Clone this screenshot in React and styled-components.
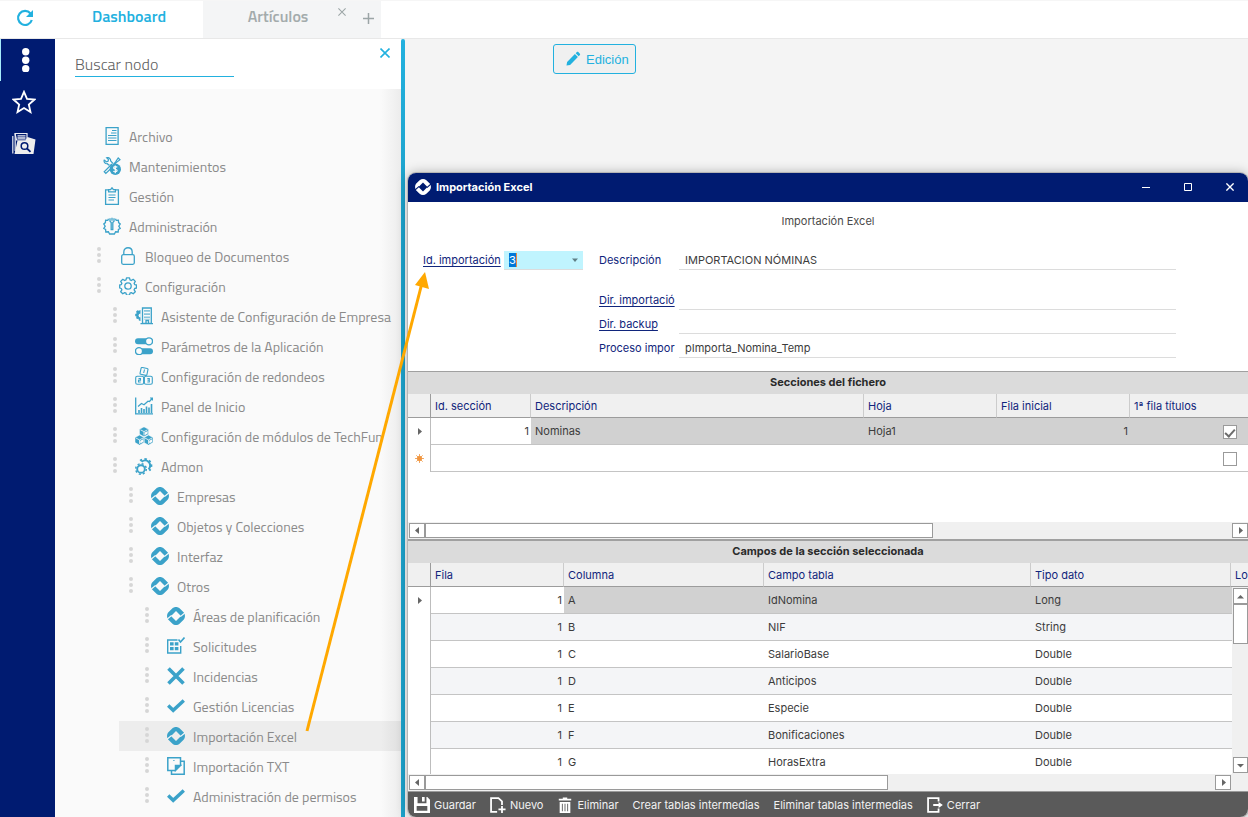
import { useState } from 'react';
import styled, { createGlobalStyle, css } from 'styled-components';

const NAVY = '#001b71';
const CYAN = '#22b1df';
const ICON = '#3ba2c9';

const GlobalStyle = createGlobalStyle`
    * {
        box-sizing: border-box;
    }

    body {
        margin: 0;
        font-family: Inter, "Liberation Sans", sans-serif;
        font-size: 11px;
        color: #3c3c3c;
    }

    button, input, select {
        font: inherit;
        color: inherit;
        margin: 0;
        padding: 0;
        border: 0;
        border-radius: 0;
        background: none;
        outline: none;
    }

    button {
        cursor: pointer;
    }
`;

const Page = styled.div`
    position: relative;
    display: flex;
    flex-direction: column;
    height: 100vh;
    overflow: hidden;
    background: #f4f4f4;
`;

/* ---------- top bar ---------- */

const TopBar = styled.header`
    display: flex;
    flex: none;
    height: 39px;
    background: #ffffff;
    border-top: 1px solid #f6f6f6;
    border-bottom: 1px solid #e8e8e8;
    font-family: "Titillium Web", Roboto, sans-serif;
`;

const RefreshButton = styled.button`
    display: flex;
    align-items: center;
    justify-content: center;
    width: 55px;
    padding: 0 5px 3px 0;
    color: ${CYAN};
`;

const Tab = styled.div`
    display: flex;
    align-items: flex-start;
    width: ${({ $active }) => ($active ? 148 : 178)}px;
    background: ${({ $active }) => ($active ? '#ffffff' : '#f4f5f6')};
    color: ${({ $active }) => ($active ? CYAN : '#a3abac')};
`;

const TabLabel = styled.button`
    flex: 1;
    height: 30px;
    font-size: 16px;
    font-weight: 600;
    text-align: center;
    padding-left: ${({ $inset }) => ($inset ? 24 : 0)}px;
`;

const TabButton = styled.button`
    display: flex;
    align-items: center;
    justify-content: center;
    width: 26px;
    height: ${({ $tall }) => ($tall ? 34 : 22)}px;
    color: #9ba5a6;
`;

/* ---------- side rail ---------- */

const Body = styled.div`
    display: flex;
    flex: 1;
    min-height: 0;
`;

const Rail = styled.nav`
    display: flex;
    flex-direction: column;
    flex: none;
    width: 55px;
    background: ${NAVY};
`;

const RailButton = styled.button`
    display: flex;
    align-items: center;
    justify-content: center;
    height: 42px;
    padding-right: ${({ $active }) => ($active ? 4 : 8)}px;
    color: #ffffff;
    border-left: 1px solid ${({ $active }) => ($active ? '#a5ecfb' : NAVY)};
`;

/* ---------- tree ---------- */

const TreePanel = styled.aside`
    display: flex;
    flex-direction: column;
    flex: none;
    width: 346px;
    background: #fafafa;
    font-family: "Titillium Web", Roboto, sans-serif;
`;

const TreeHead = styled.div`
    display: flex;
    justify-content: space-between;
    align-items: flex-start;
    height: 50px;
    padding: 9px 11px 0 20px;
    background: #ffffff;
`;

const SearchInput = styled.input`
    width: 159px;
    height: 29px;
    padding-top: 3px;
    font-size: 16px;
    font-weight: 300;
    border-bottom: 1px solid ${CYAN};

    &::placeholder {
        color: #606060;
        opacity: 1;
    }
`;

const CloseButton = styled.button`
    display: flex;
    color: ${CYAN};
`;

const TreeList = styled.ul`
    flex: 1;
    margin: 0;
    padding: 32px 0 0;
    list-style: none;
    overflow: hidden;
    background: linear-gradient(to left, #ececec, #fafafa 20px);
`;

const TreeRow = styled.li`
    margin-left: ${({ $level }) => $level * 16}px;
    background: ${({ $selected }) => ($selected ? 'rgba(0, 0, 0, 0.05)' : 'transparent')};
`;

const TreeButton = styled.button`
    display: flex;
    align-items: center;
    width: 100%;
    height: 30px;
    padding-left: 26px;
    font-size: 14px;
    font-weight: 400;
    color: #8a8a8a;
    white-space: nowrap;

    svg {
        flex: none;
    }
`;

const DotsSlot = styled.span`
    display: flex;
    width: 22px;
    padding-bottom: 2px;
    color: #d6d6d6;
`;

const TreeLabel = styled.span`
    padding-left: 8px;
`;

const Splitter = styled.div`
    flex: none;
    width: 4px;
    border-radius: 2px 2px 0 0;
    background: linear-gradient(${CYAN}, #1da2cb 160px);
`;

/* ---------- workspace ---------- */

const Workspace = styled.main`
    display: flex;
    flex-direction: column;
    flex: 1;
    min-width: 0;
    padding-left: 3px;
`;

const WorkspaceBar = styled.div`
    flex: none;
    height: 134px;
    padding: 5px 0 0 145px;
`;

const EditButton = styled.button`
    display: flex;
    align-items: center;
    gap: 5px;
    height: 30px;
    padding: 0 6px 0 11px;
    border: 1px solid ${CYAN};
    border-radius: 3px;
    background: #f0f0f0;
    color: ${CYAN};
    font-family: "Liberation Sans", sans-serif;
    font-size: 13px;
`;

const Window = styled.section`
    display: flex;
    flex-direction: column;
    flex: 1;
    min-height: 0;
    border-radius: 8px;
    overflow: hidden;
    background: #ffffff;
    box-shadow: 0 0 0 1px #b5b5b5, 0 0 12px rgba(0, 0, 0, 0.3);
`;

const TitleBar = styled.div`
    display: flex;
    align-items: center;
    flex: none;
    height: 29px;
    padding: 0 0 1px 7px;
    background: ${NAVY};
    color: #ffffff;
`;

const WindowTitle = styled.h1`
    flex: 1;
    margin: 0;
    padding-left: 5px;
    font-size: 11px;
    font-weight: 700;
`;

const WindowButton = styled.button`
    display: flex;
    align-items: center;
    justify-content: center;
    width: 42px;
    height: 28px;

    &:last-child {
        width: 36px;
        margin-left: 3px;
    }
`;

/* ---------- form ---------- */

const Form = styled.form`
    flex: none;
    padding: 0 72px 13px 15px;
`;

const FormTitle = styled.h2`
    height: 44px;
    margin: 0 -57px 0 0;
    font-size: 11px;
    font-weight: 400;
    line-height: 38px;
    text-align: center;
    color: #4a4a4a;
`;

const Fields = styled.div`
    display: grid;
    grid-template-columns: 81px 79px 16px 80px 1fr;
    grid-auto-rows: 24px;
`;

const DirFields = styled(Fields)`
    margin-top: 16px;
`;

const Label = styled.label`
    grid-column: ${({ $first }) => ($first ? 1 : 4)};
    overflow: hidden;
    white-space: nowrap;
    line-height: 28px;
    color: #10257c;
    text-decoration: ${({ $link }) => ($link ? 'underline' : 'none')};
    text-decoration-skip-ink: none;
    text-underline-offset: 2px;
`;

const TextInput = styled.input`
    grid-column: 5;
    min-width: 0;
    height: 24px;
    padding: 4px 6px 0;
    border-bottom: 1px solid #dcdcdc;
`;

const Combo = styled.div`
    display: grid;
    align-self: end;
    align-items: center;
    height: 19px;
    border-bottom: 1px solid #dcdcdc;

    > * {
        grid-area: 1 / 1;
    }

    svg {
        justify-self: end;
        margin-right: 4px;
        pointer-events: none;
    }
`;

const ComboSelect = styled.select`
    appearance: none;
    width: 100%;
    height: 18px;
    padding-left: 5px;
    color: #ffffff;
    background:
        linear-gradient(#0078d7, #0078d7) 5px 2px / 7px 14px no-repeat,
        linear-gradient(#f08a3c, #f08a3c) 12px 2px / 1px 14px no-repeat,
        #c0f4fe;

    option {
        color: #3c3c3c;
    }
`;

/* ---------- grids ---------- */

const Section = styled.section`
    display: flex;
    flex-direction: column;
    flex: ${({ $grow }) => ($grow ? '1 1 0' : 'none')};
    min-height: 0;
    border-top: ${({ $grow }) => ($grow ? 2 : 1)}px solid #a0a0a0;
`;

const SectionTitle = styled.h2`
    flex: none;
    margin: 0;
    height: 22px;
    font-size: 11px;
    font-weight: 700;
    line-height: 21px;
    text-align: center;
    color: #2a2a2a;
    background: #dbdbdb;
`;

const GridArea = styled.div`
    position: relative;
    overflow: hidden;
    ${({ $grow }) => ($grow ? css`flex: 1 1 0; min-height: 0;` : css`height: 128px;`)}
`;

const Table = styled.table`
    width: 100%;
    table-layout: fixed;
    border-collapse: separate;
    border-spacing: 0;
`;

const Col = styled.col`
    width: ${({ $width }) => ($width ? `${$width}px` : 'auto')};
`;

const Th = styled.th`
    height: 24px;
    padding: 0 4px;
    overflow: hidden;
    white-space: nowrap;
    text-align: left;
    font-weight: 400;
    color: #10257c;
    background: #f0f0f0;
    border-right: 1px solid ${({ $marker }) => ($marker ? '#9c9c9c' : '#cccccc')};
    border-bottom: 1px solid #9c9c9c;

    &:last-child {
        border-right: 0;
    }
`;

const Marker = styled.td`
    height: 27px;
    padding: 0;
    text-align: center;
    border-right: 1px solid #bdbdbd;

    svg {
        display: block;
        margin: 0 auto;
    }
`;

const Td = styled.td`
    height: 27px;
    padding: 0 4px;
    overflow: hidden;
    white-space: nowrap;
    text-align: ${({ $align }) => $align || 'left'};
    border-bottom: 1px solid #c4c4c4;
`;

const Tr = styled.tr`
    ${Td} {
        background: ${({ $striped }) => ($striped ? '#f4f5f7' : '#ffffff')};
    }

    ${({ $selected }) => $selected && css`
        ${Td}:nth-child(n + 3) {
            background: #d1d1d1;
        }
    `}
`;

const NumberTd = styled(Td)`
    padding-right: 2px;
    text-align: right;
`;

const CheckTd = styled(Td)`
    text-align: right;
    padding-right: 11px;
`;

const Checkbox = styled.input`
    appearance: none;
    display: inline-block;
    width: 14px;
    height: 14px;
    vertical-align: middle;
    border: 1px solid #9a9a9a;
    background: #ffffff;

    &:checked::after {
        content: '';
        display: block;
        width: 4px;
        height: 8px;
        margin: 1px auto 0;
        border: solid #6c6c6c;
        border-width: 0 2px 2px 0;
        transform: rotate(42deg);
    }
`;

const ScrollRow = styled.div`
    display: flex;
    flex: none;
    height: 17px;
    padding: 1px ${({ $corner }) => ($corner ? 17 : 0)}px 1px 1px;
    background: #f0f0f0;
`;

const ScrollColumn = styled.div`
    position: absolute;
    top: 24px;
    right: 0;
    bottom: 0;
    width: 16px;
    display: flex;
    flex-direction: column;
    padding: 1px 0 1px 1px;
    background: #f0f0f0;
`;

const ScrollButton = styled.button`
    display: flex;
    align-items: center;
    justify-content: center;
    flex: 0 0 16px;
    background: #ffffff;
    border: 1px solid #9a9a9a;
    color: #666666;
`;

const Thumb = styled.div`
    flex: ${({ $size }) => $size};
    background: #ffffff;
    border: 1px solid #9a9a9a;
`;

const Track = styled.div`
    flex: ${({ $size }) => $size};
`;

/* ---------- actions ---------- */

const ActionBar = styled.footer`
    display: flex;
    align-items: center;
    flex: none;
    height: 26px;
    padding: 1px 0 0 6px;
    gap: 14px;
    background: #5a5a5a;
    border-top: 1px solid #9a9a9a;
    color: #f2f2f2;
`;

const Action = styled.button`
    display: flex;
    align-items: center;
    gap: 4px;
    height: 24px;
    white-space: nowrap;
`;

const ArrowLayer = styled.svg`
    position: absolute;
    top: 0;
    left: 0;
    pointer-events: none;
`;

/* ---------- icons ---------- */

function Svg({ size = 18, children, ...rest }) {
    return (
        <svg width={size} height={size} viewBox="0 0 18 18" fill="none" stroke={ICON} strokeWidth="1.3" {...rest}>
            {children}
        </svg>
    );
}

function BrandIcon({ color = ICON, gap = '#fafafa', size = 18 }) {
    return (
        <Svg size={size} stroke="none">
            <path
                fill={color}
                fillRule="evenodd"
                d="M5.2 1.5C7.4-.5 10.6-.5 12.8 1.5L16.6 5.2C18.4 7.3 18.4 10.7 16.6 12.8L12.8 16.5C10.6 18.5 7.4 18.5 5.2 16.5L1.4 12.8C-.4 10.7-.4 7.3 1.4 5.2ZM9 4L4 9L9 14L14 9Z"
            />
            <path d="M4.600 8.400L0 12.400M13.400 9.600L18 5.600" stroke={gap} strokeWidth="1.200" />
        </Svg>
    );
}

const treeIcons = {
    file: (
        <Svg>
            <path d="M3.1.7h12v16.6h-12z" />
            <path d="M9 3.500h4.500M8 6h5.500M5 8.500h8.500M5 11h8.500M5 13.500h8.500" strokeWidth="1.200" />
        </Svg>
    ),
    maintenance: (
        <Svg>
            <path d="M6.600 7.600L9 10M1.300 2.800l2 2 1.700-.5.5-1.600-1.900-1.900c2-.8 4.300.7 4 3L10 6.500M1.300 2.800C.5 4.800 2 7 4.300 6.700L6 8.300M10.500 7.300l2.100-2.500L15.200 1l1.800 1.800-3.800 2.800-2 2M9 7L1.200 14.800l1.600 1.700 4.400-4.300" strokeWidth="1.200" />
            <circle cx="12.300" cy="12.300" r="5.700" fill={ICON} stroke="none" />
            <path d="M14.200 10.400c-.6-1-3.600-1-3.600.5 0 1.600 3.500 1 3.500 2.700 0 1.500-3 1.500-3.700.4M12.300 8.500v7.800" stroke="#fafafa" strokeWidth="1.200" />
        </Svg>
    ),
    clipboard: (
        <Svg>
            <path d="M5.500 2.800H2.600v14.500h12.800V2.800h-2.900M5.600 4.800V2.600h2L9 .8l1.400 1.800h2v2.200z" />
            <path d="M5.500 8h7M5.500 10.500h7M5.500 13h5.500" strokeWidth="1.200" />
        </Svg>
    ),
    admin: (
        <Svg>
            <path d="M5.500 1.800L4.800 3.400 2.600 3.200 2.400 5.600.8 7l1.400 2.200L.8 11.500l1.800 1 .2 2.500 2.600-.2 1.200 2.200h4.800l1.200-2.200 2.600.2.200-2.500 1.800-1-1.400-2.300L17.200 7l-1.600-1.400-.2-2.400-2.200.2-.7-1.600" />
            <path d="M7 1.200v3l1.200 1.400v7h1.600v-7L11 4.200v-3M9 .8v3" />
        </Svg>
    ),
    lock: (
        <Svg>
            <rect x="2.700" y="7.700" width="12.600" height="9.600" rx="1.500" />
            <path d="M4.800 7.700V5c0-5.700 8.400-5.700 8.400 0v2.700" />
        </Svg>
    ),
    gear: (
        <Svg>
            <circle cx="9" cy="9" r="3.200" />
            <path
                strokeLinejoin="round"
                d="M7.500.800h3l.5 2.100 1.300.6 1.900-1.200 2.100 2.100-1.200 1.900.6 1.300 1.800.400v3l-1.800.5-.6 1.300 1.200 1.900-2.100 2.100-1.900-1.200-1.300.6-.5 2H7.500l-.5-2-1.300-.6-1.900 1.200-2.100-2.100 1.200-1.900-.6-1.300L.700 11V8l1.600-.400.600-1.300-1.200-1.900 2.100-2.100 1.900 1.200L7 2.900z"
            />
        </Svg>
    ),
    building: (
        <Svg>
            <path d="M7.500 1h8.800v15.300H7.500zM5.500 16.600H18" />
            <path d="M10 3v10M12 3v10M14 3v10" strokeDasharray="1.800 1.400" strokeWidth="1.200" />
            <path d="M5.500 3v11l-1.600-.6-.4-1.600-1.600.2-1-1.600L2 9.900.2 9V7l1.600-.7-.8-1.500 1.400-1.500 1.400.5z" fill={ICON} stroke="none" />
            <path d="M5.600 6.500a2 2 0 000 4" fill="#fafafa" stroke="none" />
            <path d="M11 16v-2.500h2.500V16" />
        </Svg>
    ),
    toggles: (
        <Svg>
            <rect x="0" y="1.300" width="18" height="6" rx="3" fill={ICON} stroke="none" />
            <rect x="0" y="11.300" width="18" height="6" rx="3" fill={ICON} stroke="none" />
            <circle cx="14" cy="4.300" r="3.500" fill="#fafafa" />
            <circle cx="4" cy="14.200" r="3.500" fill="#fafafa" />
        </Svg>
    ),
    blocks: (
        <Svg strokeWidth="1.100">
            <rect x="5.600" y=".900" width="7" height="7" rx="1" transform="rotate(12 9 4)" />
            <rect x=".700" y="9.300" width="7.900" height="7.900" rx="1.500" />
            <rect x="9.400" y="9.300" width="7.900" height="7.900" rx="1.500" />
            <path d="M9.500 2.500L8.700 6M3.500 11.600h2v1.600h-2v1.800h2.200M12.300 11.600h2V15h-2M12.500 13.300h1.800" />
        </Svg>
    ),
    chart: (
        <Svg>
            <path d="M.7.500v16.300H18" />
            <path d="M3 9.500l3.500-3 2.500 1.200 4-3.500 1.500.3L17 1.500M15 1h2.500v2.500" strokeWidth="1.200" />
            <path d="M4 16v-3M6.500 16v-5M9 16v-4M11.500 16V9.500M14 16v-5.500M16.500 16V7" strokeWidth="1.600" />
        </Svg>
    ),
    cubes: (
        <Svg stroke="#fafafa" strokeWidth=".600">
            <path fill={ICON} d="M9-.2l4.600 2.400v5L9 9.800 4.400 7.200v-5zM4.500 8l4.600 2.500v5l-4.600 2.700-4.600-2.700v-5zM13.500 8l4.600 2.500v5l-4.600 2.700-4.600-2.700v-5z" />
            <path d="M5.400 2.800L9 4.600l3.600-1.800M9 4.600v4M.9 11l3.600 1.900L8.100 11M4.500 12.900v4M9.900 11l3.600 1.900 3.600-1.900M13.500 12.900v4" strokeWidth=".800" />
            <path d="M9.700 5.500l3-1.500v2.600l-3 1.600zM5.200 13.800l3-1.500v2.600l-3 1.600zM14.200 13.800l3-1.500v2.600l-3 1.600z" fill="#fafafa" stroke="none" />
        </Svg>
    ),
    gears: (
        <Svg>
            <circle cx="6" cy="12" r="3.800" strokeWidth="1.900" />
            <circle cx="6" cy="12" r="5.300" strokeWidth="1.500" strokeDasharray="2.080 2.080" />
            <path d="M6.600 4.900a4.700 4.700 0 117 7.300" strokeWidth="2" />
            <path d="M5.200 3.800a6.300 6.300 0 119 9.800" strokeWidth="2" strokeDasharray="2.300 2.300" />
        </Svg>
    ),
    request: (
        <Svg>
            <path d="M10.500 3H.700v13h13V9" strokeWidth="1.400" />
            <path d="M3 5.300h3.600v3.200H3zM7.800 5.300h3.600v3.200H7.800zM3 10h3.600v3.200H3zM7.800 10h3.600v3.200H7.800z" fill={ICON} stroke="none" />
            <path d="M11.500 2.500l2 2.500L17.500.500" strokeWidth="1.600" />
        </Svg>
    ),
    cross: (
        <Svg strokeWidth="3.600">
            <path d="M1.500 1.500l15 15M16.500 1.500l-15 15" />
        </Svg>
    ),
    check: (
        <Svg strokeWidth="3.400">
            <path d="M1.200 8.500l5 4.800L16.800 3.500" />
        </Svg>
    ),
    copy: (
        <Svg strokeWidth="1.500">
            <path d="M13.500 4.200h3.700v13H4.500v-3.500" />
            <path d="M8.500 13.500H.800V.800h12.700V9" />
            <path d="M13.500 8.500l-5 5v-5z" fill={ICON} />
            <path d="M6.300 3.500h1.200" strokeWidth="1.200" />
        </Svg>
    ),
    brand: <BrandIcon />
};

function Dots({ radius = 2, pitch = 6 }) {
    const width = radius * 2;
    const height = width + pitch * 2;
    return (
        <svg width={width} height={height} fill="currentColor">
            {[0, 1, 2].map(i => <circle key={i} cx={radius} cy={radius + i * pitch} r={radius} />)}
        </svg>
    );
}

function Cross({ size = 10, width = 1.4 }) {
    return (
        <svg width={size} height={size} viewBox="0 0 10 10" stroke="currentColor" strokeWidth={width}>
            <path d="M.5.500l9 9M9.500.500l-9 9" />
        </svg>
    );
}

const triangles = {
    left: 'M6 1v7L2 4.500z',
    right: 'M3 1v7L7 4.500z',
    up: 'M1 6.500h7L4.500 3z',
    down: 'M1 3h7L4.500 6.500z'
};

function Triangle({ direction }) {
    return (
        <svg width="9" height="9" fill="#666666">
            <path d={triangles[direction]} />
        </svg>
    );
}

/* ---------- data ---------- */

const nodes = [
    { label: 'Archivo', level: 0, icon: 'file' },
    { label: 'Mantenimientos', level: 0, icon: 'maintenance' },
    { label: 'Gestión', level: 0, icon: 'clipboard' },
    { label: 'Administración', level: 0, icon: 'admin' },
    { label: 'Bloqueo de Documentos', level: 1, icon: 'lock' },
    { label: 'Configuración', level: 1, icon: 'gear' },
    { label: 'Asistente de Configuración de Empresa', level: 2, icon: 'building' },
    { label: 'Parámetros de la Aplicación', level: 2, icon: 'toggles' },
    { label: 'Configuración de redondeos', level: 2, icon: 'blocks' },
    { label: 'Panel de Inicio', level: 2, icon: 'chart' },
    { label: 'Configuración de módulos de TechFun', level: 2, icon: 'cubes' },
    { label: 'Admon', level: 2, icon: 'gears' },
    { label: 'Empresas', level: 3, icon: 'brand' },
    { label: 'Objetos y Colecciones', level: 3, icon: 'brand' },
    { label: 'Interfaz', level: 3, icon: 'brand' },
    { label: 'Otros', level: 3, icon: 'brand' },
    { label: 'Áreas de planificación', level: 4, icon: 'brand' },
    { label: 'Solicitudes', level: 4, icon: 'request' },
    { label: 'Incidencias', level: 4, icon: 'cross' },
    { label: 'Gestión Licencias', level: 4, icon: 'check' },
    { label: 'Importación Excel', level: 4, icon: 'brand' },
    { label: 'Importación TXT', level: 4, icon: 'copy' },
    { label: 'Administración de permisos', level: 4, icon: 'check' }
];

const fields = [
    { column: 'A', name: 'IdNomina', type: 'Long' },
    { column: 'B', name: 'NIF', type: 'String' },
    { column: 'C', name: 'SalarioBase', type: 'Double' },
    { column: 'D', name: 'Anticipos', type: 'Double' },
    { column: 'E', name: 'Especie', type: 'Double' },
    { column: 'F', name: 'Bonificaciones', type: 'Double' },
    { column: 'G', name: 'HorasExtra', type: 'Double' }
];

const actionIcons = {
    save: (
        <Svg size={16} stroke="none" fill="#ffffff">
            <path fillRule="evenodd" d="M0 0h4v7h10V0h1l3 3v15H0zM3 10v5.500h12V10z" />
            <path d="M9 0h3v5H9z" />
        </Svg>
    ),
    create: (
        <Svg size={16} stroke="#ffffff" strokeWidth="2">
            <path d="M8 16.800H1.200V1.200h8.300L13.500 5v4M13.500 10v8M9.500 14h8" />
        </Svg>
    ),
    remove: (
        <Svg size={16} stroke="none" fill="#ffffff">
            <path fillRule="evenodd" d="M2 2h4.500V.500h5V2H16v2H2zM3 5.500h12V18H3zM5.500 7.500v8.500h1V7.500zM8.500 7.500v8.500h1V7.500zM11.500 7.500v8.500h1V7.500z" />
        </Svg>
    ),
    exit: (
        <Svg size={16} stroke="#ffffff" strokeWidth="2">
            <path d="M13 5V1.200H1.200v15.600H13V13M7 9h9" />
            <path d="M13 5.500L17.800 9 13 12.500z" fill="#ffffff" stroke="none" />
        </Svg>
    )
};

const actions = [
    { label: 'Guardar', icon: 'save' },
    { label: 'Nuevo', icon: 'create' },
    { label: 'Eliminar', icon: 'remove' },
    { label: 'Crear tablas intermedias' },
    { label: 'Eliminar tablas intermedias' },
    { label: 'Cerrar', icon: 'exit' }
];

/* ---------- components ---------- */

function HorizontalScroll({ thumb, track, corner }) {
    return (
        <ScrollRow $corner={corner}>
            <ScrollButton aria-label="Desplazar a la izquierda"><Triangle direction="left" /></ScrollButton>
            <Thumb $size={thumb} />
            <Track $size={track} />
            <ScrollButton aria-label="Desplazar a la derecha"><Triangle direction="right" /></ScrollButton>
        </ScrollRow>
    );
}

function Header() {
    return (
        <TopBar>
            <RefreshButton aria-label="Actualizar">
                <svg width="18" height="18" viewBox="0 0 18 18" fill="none" stroke="currentColor" strokeWidth="2.200">
                    <path d="M14.500 4.500A7 7 0 1015.800 11" />
                    <path d="M17 1v7h-7z" fill="currentColor" stroke="none" />
                </svg>
            </RefreshButton>
            <Tab $active>
                <TabLabel>Dashboard</TabLabel>
            </Tab>
            <Tab>
                <TabLabel $inset>Artículos</TabLabel>
                <TabButton aria-label="Cerrar pestaña"><Cross size={8} width={1.3} /></TabButton>
                <TabButton $tall aria-label="Nueva pestaña">
                    <svg width="11" height="11" stroke="currentColor" strokeWidth="1.500">
                        <path d="M5.500 0v11M0 5.500h11" />
                    </svg>
                </TabButton>
            </Tab>
        </TopBar>
    );
}

function SideRail() {
    return (
        <Rail>
            <RailButton $active aria-label="Menú"><Dots radius={3.7} pitch={8.5} /></RailButton>
            <RailButton aria-label="Favoritos">
                <svg width="24" height="24" viewBox="0 0 24 24" fill="none" stroke="currentColor" strokeWidth="1.800">
                    <path d="M12 1.800l3 7 7.500.700-5.700 5 1.700 7.500-6.500-4-6.500 4 1.700-7.500-5.700-5 7.500-.700z" />
                </svg>
            </RailButton>
            <RailButton aria-label="Buscar documentos">
                <svg width="24" height="24" viewBox="0 0 24 24">
                    <path d="M.8 4v17.500M3.200 2v17" fill="none" stroke="#e8eaf2" strokeWidth="1.200" />
                    <path d="M3 1.500h12V8H4.500z" fill="none" stroke="#e8eaf2" strokeWidth="1.200" />
                    <path d="M5.500 3.800h8M5.500 6h8" stroke="#e8eaf2" strokeWidth="1.300" />
                    <path d="M5.500 8.500h8L15.500 5l8 2.500L21.500 22H2.500z" fill="#eeeeee" />
                    <circle cx="12.500" cy="14" r="3.300" fill="none" stroke={NAVY} strokeWidth="1.500" />
                    <path d="M15 16.500l3.500 3.300" stroke={NAVY} strokeWidth="1.800" />
                </svg>
            </RailButton>
        </Rail>
    );
}

function Tree() {
    const [selected, setSelected] = useState('Importación Excel');

    return (
        <TreePanel>
            <TreeHead>
                <SearchInput placeholder="Buscar nodo" aria-label="Buscar nodo" />
                <CloseButton aria-label="Cerrar panel"><Cross width={1.6} /></CloseButton>
            </TreeHead>
            <TreeList>
                {nodes.map(node => (
                    <TreeRow key={node.label} $level={node.level} $selected={node.label === selected}>
                        <TreeButton onClick={() => setSelected(node.label)}>
                            <DotsSlot>{node.level > 0 && <Dots />}</DotsSlot>
                            {treeIcons[node.icon]}
                            <TreeLabel>{node.label}</TreeLabel>
                        </TreeButton>
                    </TreeRow>
                ))}
            </TreeList>
        </TreePanel>
    );
}

function ImportForm() {
    return (
        <Form onSubmit={e => e.preventDefault()}>
            <FormTitle>Importación Excel</FormTitle>
            <Fields>
                <Label $first $link htmlFor="importId">Id. importación</Label>
                <Combo>
                    <ComboSelect id="importId" defaultValue="3">
                        <option value="3">3</option>
                    </ComboSelect>
                    <svg width="8" height="5" fill="#5f7f86"><path d="M1 .500h6L4 4z" /></svg>
                </Combo>
                <Label htmlFor="description">Descripción</Label>
                <TextInput id="description" defaultValue="IMPORTACION NÓMINAS" />
            </Fields>
            <DirFields>
                <Label $link htmlFor="importDir">Dir. importació</Label>
                <TextInput id="importDir" />
                <Label $link htmlFor="backupDir">Dir. backup</Label>
                <TextInput id="backupDir" />
                <Label htmlFor="process">Proceso impor</Label>
                <TextInput id="process" defaultValue="pImporta_Nomina_Temp" />
            </DirFields>
        </Form>
    );
}

function SectionsGrid() {
    return (
        <Section>
            <SectionTitle>Secciones del fichero</SectionTitle>
            <GridArea>
                <Table>
                    <colgroup>
                        <Col $width={23} />
                        <Col $width={100} />
                        <Col />
                        <Col $width={133} />
                        <Col $width={133} />
                        <Col $width={118} />
                    </colgroup>
                    <thead>
                        <tr>
                            <Th $marker />
                            <Th>Id. sección</Th>
                            <Th>Descripción</Th>
                            <Th>Hoja</Th>
                            <Th>Fila inicial</Th>
                            <Th>1ª fila títulos</Th>
                        </tr>
                    </thead>
                    <tbody>
                        <Tr $selected>
                            <Marker><Triangle direction="right" /></Marker>
                            <NumberTd>1</NumberTd>
                            <Td>Nominas</Td>
                            <Td>Hoja1</Td>
                            <NumberTd>1</NumberTd>
                            <CheckTd><Checkbox type="checkbox" defaultChecked aria-label="1ª fila títulos" /></CheckTd>
                        </Tr>
                        <Tr>
                            <Marker>
                                <svg width="9" height="9" viewBox="0 0 9 9" stroke="#f0953f" strokeWidth=".800">
                                    <path d="M4.500 0v9M0 4.500h9M1.300 1.300l6.400 6.400M7.700 1.300L1.300 7.700" />
                                    <circle cx="4.500" cy="4.500" r="2.300" fill="#f0953f" />
                                </svg>
                            </Marker>
                            <Td />
                            <Td />
                            <Td />
                            <Td />
                            <CheckTd><Checkbox type="checkbox" aria-label="1ª fila títulos, fila nueva" /></CheckTd>
                        </Tr>
                    </tbody>
                </Table>
            </GridArea>
            <HorizontalScroll thumb={507} track={300} />
        </Section>
    );
}

function FieldsGrid() {
    return (
        <Section $grow>
            <SectionTitle>Campos de la sección seleccionada</SectionTitle>
            <GridArea $grow>
                <Table>
                    <colgroup>
                        <Col $width={23} />
                        <Col $width={133} />
                        <Col $width={200} />
                        <Col />
                        <Col $width={200} />
                        <Col $width={17} />
                    </colgroup>
                    <thead>
                        <tr>
                            <Th $marker />
                            <Th>Fila</Th>
                            <Th>Columna</Th>
                            <Th>Campo tabla</Th>
                            <Th>Tipo dato</Th>
                            <Th>Lo</Th>
                        </tr>
                    </thead>
                    <tbody>
                        {fields.map((field, index) => (
                            <Tr key={field.column} $selected={index === 0} $striped={index % 2 === 1}>
                                <Marker>{index === 0 && <Triangle direction="right" />}</Marker>
                                <NumberTd>1</NumberTd>
                                <Td>{field.column}</Td>
                                <Td>{field.name}</Td>
                                <Td>{field.type}</Td>
                                <Td />
                            </Tr>
                        ))}
                    </tbody>
                </Table>
                <ScrollColumn>
                    <ScrollButton aria-label="Subir"><Triangle direction="up" /></ScrollButton>
                    <Thumb $size={38} />
                    <Track $size={115} />
                    <ScrollButton aria-label="Bajar"><Triangle direction="down" /></ScrollButton>
                </ScrollColumn>
            </GridArea>
            <HorizontalScroll thumb={462} track={328} corner />
        </Section>
    );
}

function ImportWindow() {
    return (
        <Window>
            <TitleBar>
                <BrandIcon color="#ffffff" gap={NAVY} size={16} />
                <WindowTitle>Importación Excel</WindowTitle>
                <WindowButton aria-label="Minimizar">
                    <svg width="8" height="8" stroke="#ffffff"><path d="M0 4.500h8" /></svg>
                </WindowButton>
                <WindowButton aria-label="Maximizar">
                    <svg width="8" height="8" stroke="#ffffff" fill="none"><path d="M.5.500h7v7h-7z" /></svg>
                </WindowButton>
                <WindowButton aria-label="Cerrar"><Cross size={8} width={1.7} /></WindowButton>
            </TitleBar>
            <ImportForm />
            <SectionsGrid />
            <FieldsGrid />
            <ActionBar>
                {actions.map(action => (
                    <Action key={action.label}>
                        {action.icon && actionIcons[action.icon]}
                        {action.label}
                    </Action>
                ))}
            </ActionBar>
        </Window>
    );
}

function App() {
    return (
        <Page>
            <GlobalStyle />
            <Header />
            <Body>
                <SideRail />
                <Tree />
                <Splitter />
                <Workspace>
                    <WorkspaceBar>
                        <EditButton>
                            <svg width="16" height="16" viewBox="0 0 16 16" fill={CYAN}>
                                <path d="M1.500 14.500l.6-3.600 7.800-7.800 3 3-7.800 7.800zM10.700 2.300l1.200-1.200c.4-.4 1-.4 1.400 0l1.600 1.600c.4.400.4 1 0 1.400l-1.200 1.200z" />
                            </svg>
                            Edición
                        </EditButton>
                    </WorkspaceBar>
                    <ImportWindow />
                </Workspace>
            </Body>
            <ArrowLayer width="440" height="740">
                <path d="M307 731L422 283" stroke="#ffa800" strokeWidth="3" />
                <path d="M425 272L415 285L429 289z" fill="#ffa800" />
            </ArrowLayer>
        </Page>
    );
}

export default App;
